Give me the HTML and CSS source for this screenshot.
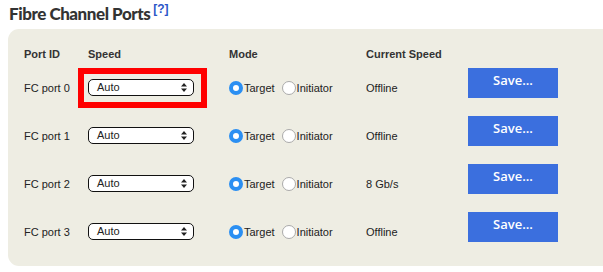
FILE: index.html
```html
<!DOCTYPE html>
<html lang="en">

<head>
  <meta charset="UTF-8">
  <meta name="viewport" content="width=device-width, initial-scale=1.0">
  <title>Fibre Channel Ports</title>
  <link rel="stylesheet" href="styles.css">
</head>

<body>

  <h2 class="section-title">Fibre Channel Ports<a class="help" href="#">[?]</a></h2>

  <div class="panel">
    <div class="ports">
      <div class="head">Port ID</div>
      <div class="head">Speed</div>
      <div class="head">Mode</div>
      <div class="head">Current Speed</div>
      <div class="head"></div>

      <!-- port 0 -->
      <div class="cell">FC port 0</div>
      <div class="cell">
        <div class="select">
          <span>Auto</span>
          <svg class="arrows" width="6" height="9" viewBox="0 0 6 9"><path d="M3 0L6 3.5H0z M3 9L0 5.5H6z" fill="#222"/></svg>
          <span class="marker"></span>
        </div>
      </div>
      <div class="cell mode">
        <span class="radio checked"></span>Target
        <span class="radio second"></span>Initiator
      </div>
      <div class="cell">Offline</div>
      <div class="cell"><button class="save-btn">Save...</button></div>

      <!-- port 1 -->
      <div class="cell">FC port 1</div>
      <div class="cell">
        <div class="select">
          <span>Auto</span>
          <svg class="arrows" width="6" height="9" viewBox="0 0 6 9"><path d="M3 0L6 3.5H0z M3 9L0 5.5H6z" fill="#222"/></svg>
        </div>
      </div>
      <div class="cell mode">
        <span class="radio checked"></span>Target
        <span class="radio second"></span>Initiator
      </div>
      <div class="cell">Offline</div>
      <div class="cell"><button class="save-btn">Save...</button></div>

      <!-- port 2 -->
      <div class="cell">FC port 2</div>
      <div class="cell">
        <div class="select">
          <span>Auto</span>
          <svg class="arrows" width="6" height="9" viewBox="0 0 6 9"><path d="M3 0L6 3.5H0z M3 9L0 5.5H6z" fill="#222"/></svg>
        </div>
      </div>
      <div class="cell mode">
        <span class="radio checked"></span>Target
        <span class="radio second"></span>Initiator
      </div>
      <div class="cell">8 Gb/s</div>
      <div class="cell"><button class="save-btn">Save...</button></div>

      <!-- port 3 -->
      <div class="cell">FC port 3</div>
      <div class="cell">
        <div class="select">
          <span>Auto</span>
          <svg class="arrows" width="6" height="9" viewBox="0 0 6 9"><path d="M3 0L6 3.5H0z M3 9L0 5.5H6z" fill="#222"/></svg>
        </div>
      </div>
      <div class="cell mode">
        <span class="radio checked"></span>Target
        <span class="radio second"></span>Initiator
      </div>
      <div class="cell">Offline</div>
      <div class="cell"><button class="save-btn">Save...</button></div>
    </div>
  </div>

</body>

</html>
```
FILE: styles.css
```css
body {
  font-family: "Liberation Sans", Arial, sans-serif;
  font-size: 11px;
  color: #333;
  background-color: #fff;
  margin: 0;
  padding: 0 0 0 8px;
  overflow: hidden;
}

.section-title {
  font-family: Lato, "Open Sans", sans-serif;
  font-size: 17px;
  font-weight: 900;
  letter-spacing: -0.45px;
  color: #333;
  margin: 0;
  padding: 2px 0 0 1px;
  height: 27px;
  line-height: 24px;
}

.help {
  font-family: "Liberation Sans", Arial, sans-serif;
  font-size: 12px;
  font-weight: bold;
  letter-spacing: 0;
  color: #2a55c8;
  text-decoration: none;
  vertical-align: top;
  position: relative;
  top: -5px;
  margin-left: 3px;
}

.panel {
  background-color: #eeede3;
  border-radius: 11px 0 0 11px;
  padding: 16px 0 11px 16px;
  width: 600px;
}

.ports {
  display: grid;
  grid-template-columns: 64px 141px 137px 102px 90px;
  grid-template-rows: 18px repeat(4, 48px);
}

.head {
  font-weight: bold;
  display: flex;
  align-items: center;
}

.cell {
  display: flex;
  align-items: center;
  color: #222;
  padding-top: 1px;
}

.select {
  position: relative;
  box-sizing: border-box;
  width: 106px;
  height: 17px;
  border: 1px solid #111;
  border-radius: 5px;
  background-color: #fff;
  display: flex;
  align-items: center;
  justify-content: space-between;
  padding: 0 6px 0 8px;
  margin-top: -1px;
}

.marker {
  position: absolute;
  left: -11px;
  top: -12px;
  width: 129px;
  height: 40px;
  box-sizing: border-box;
  border: 6px solid #f00;
}

.radio {
  box-sizing: border-box;
  display: inline-block;
  width: 14px;
  height: 14px;
  border-radius: 50%;
  border: 1px solid #aaa;
  background-color: #fff;
  margin-right: 1px;
}

.radio.second {
  margin-left: 7px;
}

.radio.checked {
  border: 4.5px solid #2b8ff2;
  background-color: #fff;
}

.save-btn {
  font-family: "Open Sans", sans-serif;
  font-size: 13px;
  font-weight: 600;
  color: #fff;
  background-color: #3b6fde;
  border: none;
  width: 90px;
  height: 30px;
  padding: 0 0 5px 0;
  margin-top: -10px;
  cursor: pointer;
}
```
